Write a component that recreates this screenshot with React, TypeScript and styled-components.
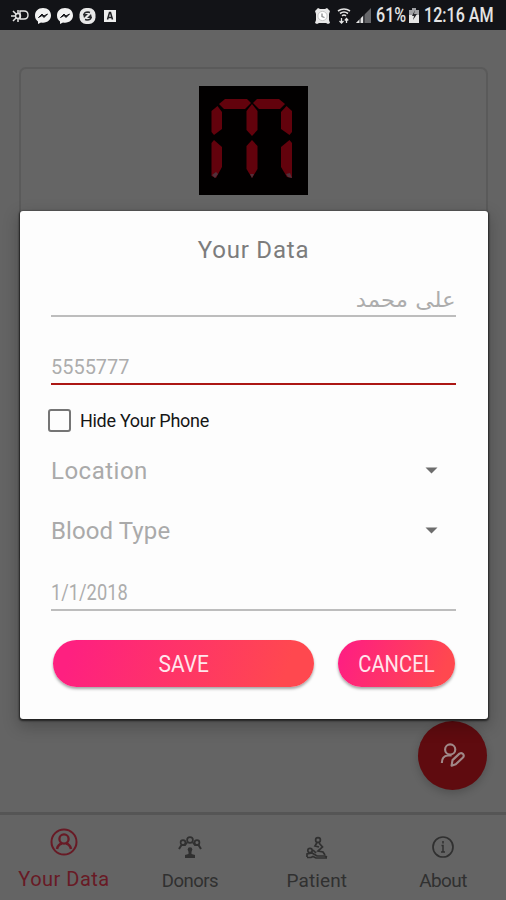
import React from "react";
import styled, { createGlobalStyle } from "styled-components";

const GlobalStyle = createGlobalStyle`
  * { box-sizing: border-box; }
  body { margin: 0; background: #646464; overflow: hidden; }
`;

const Screen = styled.div`
  position: relative;
  display: flex;
  flex-direction: column;
  width: 506px;
  height: 900px;
  background: #646464;
  font-family: Roboto, "Liberation Sans", sans-serif;
`;

const StatusBar = styled.header`
  display: flex;
  align-items: center;
  justify-content: space-between;
  height: 30px;
  padding: 1px 12px 0 11px;
  background: #121317;
  color: #e4e4e4;
`;

const Notifications = styled.div`
  display: flex;
  align-items: center;
  gap: 6px;
`;

const SystemStatus = styled.div`
  display: flex;
  align-items: center;
`;

const StatusText = styled.span<{ $width: number; $gap?: number }>`
  width: ${(p) => p.$width}px;
  margin-left: ${(p) => p.$gap ?? 0}px;
  font-size: 19.5px;
  font-weight: 500;
  line-height: 30px;
  white-space: nowrap;
  transform: scaleX(0.825);
  transform-origin: left;
`;

const Content = styled.main`
  display: flex;
  flex-direction: column;
  flex: 1;
  padding: 37px 18px 0 19px;
`;

const ProfileCard = styled.section`
  display: flex;
  justify-content: center;
  align-items: flex-start;
  height: 497px;
  padding: 17px 1px 0 0;
  border: 2px solid #5a5a5a;
  border-radius: 7px;
  background: #656565;
`;

const TabBar = styled.nav`
  display: grid;
  grid-template-columns: repeat(4, 1fr);
  height: 88px;
  border-top: 3px solid #555;
  background: #646464;
`;

const Tab = styled.a<{ $active?: boolean }>`
  display: flex;
  flex-direction: column;
  align-items: center;
  justify-content: flex-end;
  padding-left: 1px;
  padding-bottom: ${(p) => (p.$active ? 8 : 6)}px;
  gap: ${(p) => (p.$active ? 10 : 9)}px;
  color: ${(p) => (p.$active ? "#681a25" : "#303030")};
`;

const TabLabel = styled.span<{ $size: number; $spacing: number }>`
  font-size: ${(p) => p.$size}px;
  line-height: 26px;
  letter-spacing: ${(p) => p.$spacing}px;
  margin-right: ${(p) => -p.$spacing}px;
`;

const EditButton = styled.button`
  position: absolute;
  left: 418px;
  top: 721px;
  display: flex;
  align-items: center;
  justify-content: center;
  width: 69px;
  height: 69px;
  padding: 0;
  border: 0;
  border-radius: 50%;
  background: #5f0b0f;
  color: #a08888;
  box-shadow: 0 3px 8px rgba(0, 0, 0, 0.2);
`;

const Dialog = styled.section`
  position: absolute;
  left: 20px;
  top: 211px;
  display: flex;
  flex-direction: column;
  width: 468px;
  height: 508px;
  padding: 20px 32px 0 31px;
  border-radius: 3px;
  background: #fdfdfd;
  box-shadow: 0 1px 2px 1px rgba(0, 0, 0, 0.6), 0 6px 16px 2px rgba(0, 0, 0, 0.22);
`;

const Title = styled.h1`
  margin: 0;
  padding-top: 1px;
  text-align: center;
  color: #7c7c7c;
  font-size: 24px;
  font-weight: 400;
  line-height: 36px;
  letter-spacing: 0.8px;
`;

const Field = styled.div<{ $height: number; $focused?: boolean; $rtl?: boolean; $drop?: number }>`
  display: flex;
  align-items: flex-end;
  direction: ${(p) => (p.$rtl ? "rtl" : "ltr")};
  height: ${(p) => p.$height}px;
  padding-bottom: ${(p) => p.$drop ?? 3}px;
  border-bottom: 2px solid ${(p) => (p.$focused ? "#ac1714" : "#bdbdbd")};
`;

const Value = styled.span<{ $size: number; $stretch?: number; $arabic?: boolean }>`
  color: #adadad;
  font-family: ${(p) => (p.$arabic ? '"DejaVu Sans", sans-serif' : "inherit")};
  font-size: ${(p) => p.$size}px;
  line-height: 26px;
  white-space: nowrap;
  transform: scaleX(${(p) => p.$stretch ?? 1});
  transform-origin: ${(p) => (p.$arabic ? "right" : "left")};
`;

const CheckRow = styled.label`
  display: flex;
  align-items: center;
  gap: 9px;
  height: 26px;
  margin: 22px 0 0 -3px;
  color: #161616;
  font-size: 18px;
  letter-spacing: -0.3px;
`;

const CheckBox = styled.span`
  width: 23px;
  height: 23px;
  border: 2px solid #757575;
  border-radius: 3px;
`;

const Select = styled.div`
  display: flex;
  align-items: center;
  justify-content: space-between;
  height: 60px;
  padding: 0 18px 0 0;
  color: #aaa;
  font-size: 24px;
`;

const SelectLabel = styled.span<{ $spacing: number }>`
  padding-top: 2px;
  letter-spacing: ${(p) => p.$spacing}px;
`;

const Selects = styled.div`
  padding-top: 7px;
`;

const Actions = styled.div`
  display: flex;
  justify-content: space-between;
  padding: 29px 1px 0 2px;
`;

const ActionButton = styled.button<{ $width: number }>`
  display: flex;
  align-items: center;
  justify-content: center;
  width: ${(p) => p.$width}px;
  height: 47px;
  padding: 2px 0 0;
  border: 0;
  border-radius: 24px;
  background: linear-gradient(110deg, #fe2080 8%, #ff484f 88%);
  color: #ffe6ec;
  font-family: inherit;
  font-size: 23px;
  box-shadow: 0 2px 3px rgba(0, 0, 0, 0.35);
`;

const ActionLabel = styled.span<{ $stretch: number }>`
  transform: scaleX(${(p) => p.$stretch});
`;

function SegmentLogo() {
  return (
    <svg width="109" height="109" viewBox="0 0 109 109">
      <rect width="109" height="109" fill="#020000" />
      <g fill="#62020c">
        <path d="M20 18l6-5h22l4 4-6 6H25z" />
        <path d="M54 17l4-4h22l6 5-5 5H60z" />
        <path d="M12.500 25l6-5 4.500 6v17l-8 6-2.500-3z" />
        <path d="M47.500 25l5.500-7 5.500 7v19l-5.500 6-5.500-6z" />
        <path d="M82 26l5.500-6 5.500 5v21l-2.500 3-8.500-6z" />
        <path d="M12.500 57l2.500-3 8 7v20l-6 11-4.500-2z" />
        <path d="M47.500 60l5.500-6 5.500 6v23l-5.500 9-5.500-9z" />
        <path d="M82 61l8.500-7 2.500 3v35l-5-1-6-10z" />
      </g>
      <path d="M13 89l4-3 2 2-3 4zM87 88l4-1 2 5-4-1zM51 88h4l-2 4z" fill="#51303a" />
    </svg>
  );
}

function Flashlight() {
  return (
    <svg width="18" height="16" viewBox="0 0 18 16" fill="none" stroke="currentColor" strokeWidth="1.4">
      <path d="M9 3h4q4 0 4 4t-4 4H9z" />
      <circle cx="7" cy="8" r="2.500" />
      <path d="M0 8h4M2 3l3 3M7 2v3M2 13l3-3M7 11v3" strokeWidth="1.500" />
    </svg>
  );
}

function MessengerBubble() {
  return (
    <svg width="16" height="16" viewBox="0 0 16 16">
      <path d="M8 0C3 0 0 3.400 0 7.500c0 2.700 1 4.600 3 5.900V16l3-1.500C12 15.500 16 12 16 7.500S13 0 8 0z" fill="#f2f2f2" />
      <path d="M3.500 9.500L7 6l2 2 3.500-2L9 9.500l-2-2z" fill="#15161a" stroke="#15161a" />
    </svg>
  );
}

function SyncBadge() {
  return (
    <svg width="17" height="16" viewBox="0 0 17 16">
      <rect x=".5" width="16" height="16" rx="6.500" fill="#e8e8e8" />
      <path d="M5 7q0-3 4-3l2 .5M12 9q0 3-4 3l-2-.5" fill="none" stroke="#292a2d" strokeWidth="1.600" />
      <path d="M4 6l5 0-4 4zM13 10H8l4-4z" fill="#292a2d" />
    </svg>
  );
}

function LetterBadge() {
  return (
    <svg width="12" height="12" viewBox="0 0 12 12">
      <rect width="12" height="12" fill="#eee" />
      <path d="M3.500 9.500l2-7h1l2 7M4.500 7.500h3" fill="none" stroke="#202124" strokeWidth="1.500" />
    </svg>
  );
}

const LetterSlot = styled.span`
  display: flex;
  margin-left: 2px;
`;

function AlarmIcon() {
  return (
    <svg width="15" height="16" viewBox="0 0 15 16">
      <path d="M0 3l3-3 2 1h5l2-1 3 3-1 3v6l1 3-2 1-2-1H4l-2 1-2-1 1-3V6z" fill="#e8e8e8" />
      <circle cx="7.500" cy="8" r="4.600" fill="#fff" stroke="#c4c4c4" />
      <path d="M7 5.500v3l2.500 1" fill="none" stroke="#8a8b8d" strokeWidth="1.300" />
    </svg>
  );
}

function WifiIcon() {
  return (
    <svg width="14" height="16" viewBox="0 0 14 16" fill="none" stroke="currentColor">
      <path d="M1 3q6-4 12 0M3 5.500q4-3 8 0M5 7.800q2-1.500 4 0" strokeWidth="1.600" />
      <path d="M4.500 10v5M2.500 13l2 2 2-2M9.500 15v-4M7.800 12.500l1.700-2 1.700 2" strokeWidth="1.300" />
    </svg>
  );
}

function SignalIcon() {
  return (
    <svg width="15" height="15" viewBox="0 0 15 15">
      <path d="M0 15L15 0v15z" fill="#66676a" />
      <path d="M0 15l7-7v7z" fill="#e5e5e5" />
      <path d="M4 8v7M8 5v10" stroke="#17181c" />
    </svg>
  );
}

function BatteryIcon() {
  return (
    <svg width="10" height="15" viewBox="0 0 10 15">
      <path d="M3 0h4v2h3v13H0V2h3z" fill="#a0a1a4" />
      <path d="M0 7h10v8H0z" fill="#e5e5e5" />
      <path d="M6 2L3 8h2l-1 4 4-6H5z" fill="#242529" />
    </svg>
  );
}

const StatusGlyph = styled.span<{ $gap: number }>`
  display: flex;
  margin-left: ${(p) => p.$gap}px;
`;

function EditPersonIcon() {
  return (
    <svg width="25" height="25" viewBox="0 0 27 27" fill="none" stroke="currentColor" strokeWidth="2.300" strokeLinejoin="round">
      <circle cx="11" cy="7" r="5.500" />
      <path d="M2 21.500Q2 14 8.500 13.500h4" />
      <path d="M13.500 18.500l7.500-7q2.500-1.500 4 .5t-.5 4l-7.500 7-4.500 1.500z" />
    </svg>
  );
}

function PersonCircleIcon() {
  return (
    <svg width="28" height="28" viewBox="0 0 28 28" fill="none" stroke="currentColor" strokeWidth="2">
      <circle cx="14" cy="14" r="12.500" />
      <circle cx="14" cy="11" r="4.600" strokeWidth="2.300" />
      <path d="M7 21q1-4.500 5-5.500M21 21q-1-4.500-5-5.500" strokeWidth="2.500" />
    </svg>
  );
}

function DonorsIcon() {
  return (
    <svg width="24" height="24" viewBox="0 0 24 24" fill="none" stroke="currentColor" strokeWidth="1.700">
      <circle cx="12" cy="5" r="2.900" />
      <circle cx="5" cy="7.500" r="2.400" />
      <circle cx="19" cy="7.500" r="2.400" />
      <path d="M1 14l2.500-4L7 10l2-2.500M23 14l-2.500-4L17 10l-2-2.500" strokeWidth="2" />
      <circle cx="12" cy="14.500" r="2.300" fill="currentColor" stroke="none" />
      <path d="M10.500 16h3v3l3.500 1v3H7v-3l3.500-1z" fill="currentColor" stroke="none" />
    </svg>
  );
}

function PatientIcon() {
  return (
    <svg width="24" height="23" viewBox="0 0 24 23" fill="none" stroke="currentColor" strokeWidth="1.700">
      <circle cx="13" cy="4" r="2.400" />
      <path d="M12 6.500l-2 3.500 4 1M14 7l3.500 4-4.500 4 5 1 2 3" />
      <circle cx="5" cy="14.500" r="2.200" />
      <path d="M2 21v-3l5-1 5 3h8l2 1M2 21.500h4l2-1 3 1.500h11M8 14l3 3" />
    </svg>
  );
}

function InfoIcon() {
  return (
    <svg width="24" height="24" viewBox="0 0 24 24" fill="none" stroke="currentColor" strokeWidth="1.700">
      <circle cx="12" cy="12" r="10" />
      <path d="M12 6v2.500M10.500 10.500H12V17M10 17h4" strokeWidth="1.500" />
    </svg>
  );
}

function Caret() {
  return (
    <svg width="13" height="7" viewBox="0 0 13 7">
      <path d="M.5.5h12l-6 6z" fill="#6d6d6d" />
    </svg>
  );
}

export default function App() {
  return (
    <>
      <GlobalStyle />
      <Screen>
        <StatusBar>
          <Notifications>
            <Flashlight />
            <MessengerBubble />
            <MessengerBubble />
            <SyncBadge />
            <LetterSlot><LetterBadge /></LetterSlot>
          </Notifications>
          <SystemStatus>
            <AlarmIcon />
            <StatusGlyph $gap={7}><WifiIcon /></StatusGlyph>
            <StatusGlyph $gap={5}><SignalIcon /></StatusGlyph>
            <StatusText $width={30} $gap={5}>61%</StatusText>
            <StatusGlyph $gap={3}><BatteryIcon /></StatusGlyph>
            <StatusText $width={70} $gap={5}>12:16 AM</StatusText>
          </SystemStatus>
        </StatusBar>
        <Content>
          <ProfileCard><SegmentLogo /></ProfileCard>
        </Content>
        <TabBar>
          <Tab $active><PersonCircleIcon /><TabLabel $size={20} $spacing={0.5}>Your Data</TabLabel></Tab>
          <Tab><DonorsIcon /><TabLabel $size={18.5} $spacing={-0.5}>Donors</TabLabel></Tab>
          <Tab><PatientIcon /><TabLabel $size={19} $spacing={0.1}>Patient</TabLabel></Tab>
          <Tab><InfoIcon /><TabLabel $size={19} $spacing={-0.6}>About</TabLabel></Tab>
        </TabBar>
        <EditButton aria-label="Edit"><EditPersonIcon /></EditButton>
        <Dialog role="dialog">
          <Title>Your Data</Title>
          <Field $height={49} $rtl $drop={2}><Value $size={21} $stretch={1.09} $arabic>على محمد</Value></Field>
          <Field $height={68} $focused><Value $size={21} $stretch={0.95}>5555777</Value></Field>
          <CheckRow><CheckBox />Hide Your Phone</CheckRow>
          <Selects>
            <Select><SelectLabel $spacing={0.5}>Location</SelectLabel><Caret /></Select>
            <Select><SelectLabel $spacing={0.1}>Blood Type</SelectLabel><Caret /></Select>
          </Selects>
          <Field $height={51}><Value $size={21.5} $stretch={0.85}>1/1/2018</Value></Field>
          <Actions>
            <ActionButton $width={261}><ActionLabel $stretch={0.91}>SAVE</ActionLabel></ActionButton>
            <ActionButton $width={117}><ActionLabel $stretch={0.88}>CANCEL</ActionLabel></ActionButton>
          </Actions>
        </Dialog>
      </Screen>
    </>
  );
}
